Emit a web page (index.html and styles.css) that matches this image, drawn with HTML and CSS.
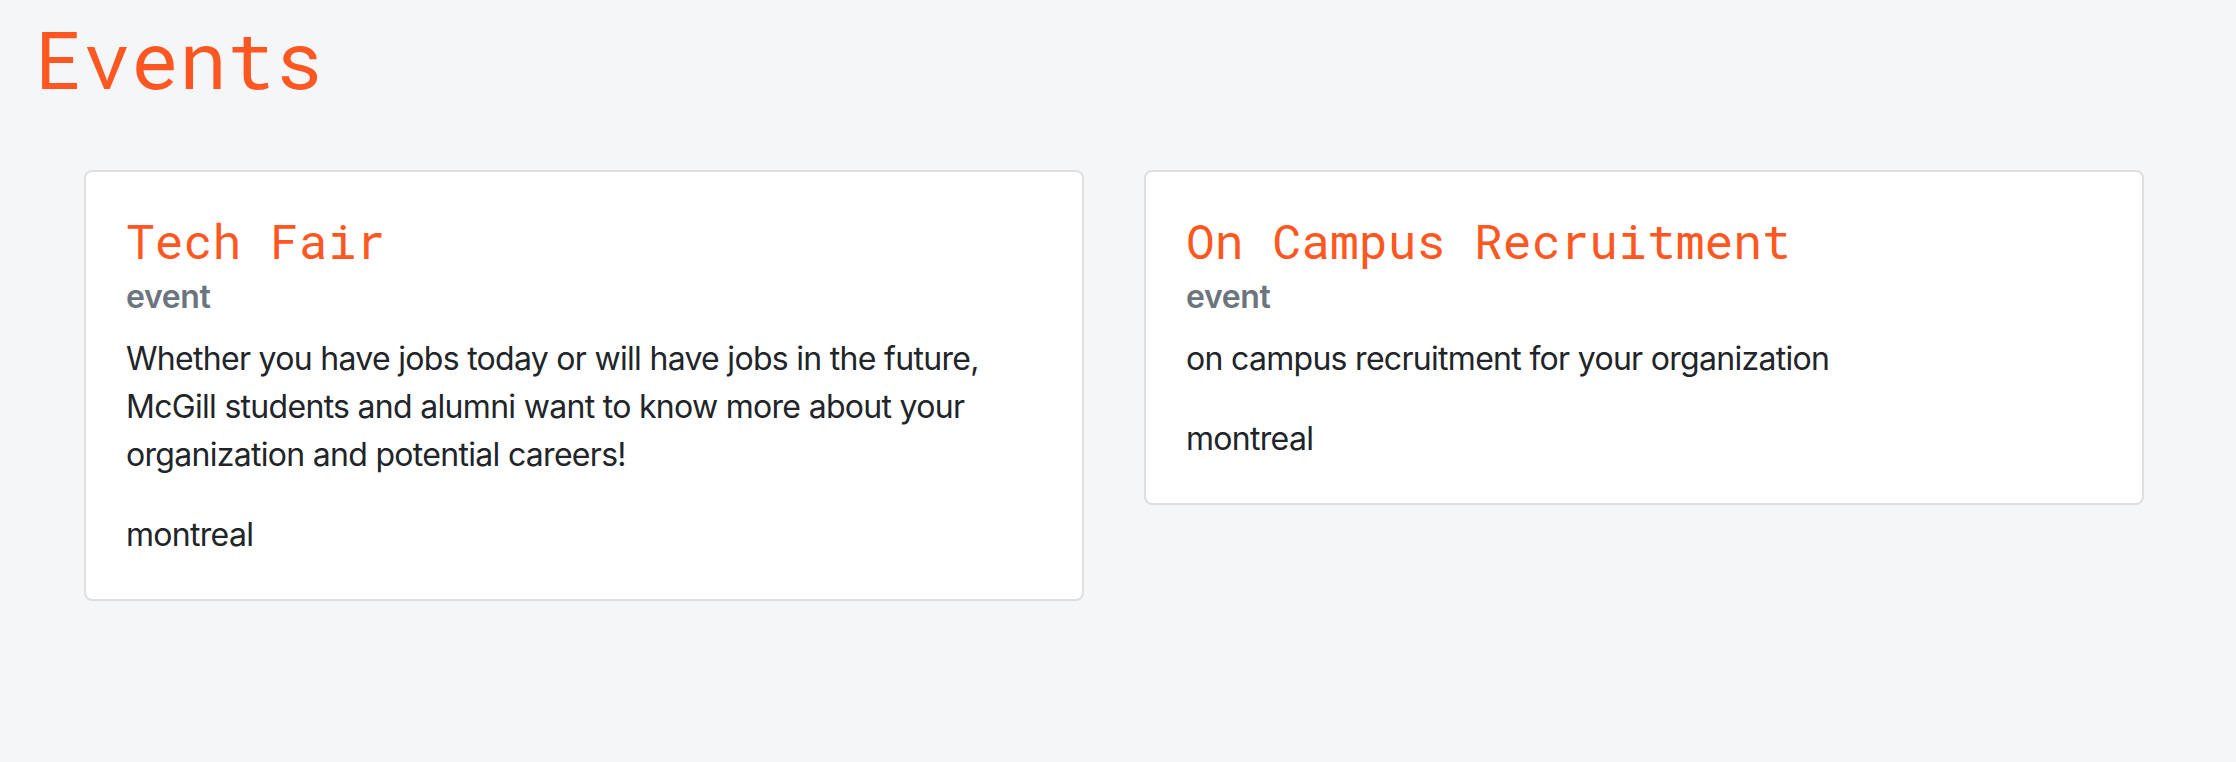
FILE: index.html
```html
<!DOCTYPE html>
<html lang="en">
<head>
<meta charset="utf-8">
<title>Events</title>
<link rel="stylesheet" href="styles.css">
</head>
<body>
<main class="page">
  <h1 class="page-title">Events</h1>
  <section class="cards">
    <article class="card">
      <h4 class="card-title">Tech Fair</h4>
      <h6 class="card-subtitle">event</h6>
      <p class="card-text">Whether you have jobs today or will have jobs in the future, McGill students and alumni want to know more about your organization and potential careers!</p>
      <p class="card-text">montreal</p>
    </article>
    <article class="card">
      <h4 class="card-title">On Campus Recruitment</h4>
      <h6 class="card-subtitle">event</h6>
      <p class="card-text">on campus recruitment for your organization</p>
      <p class="card-text">montreal</p>
    </article>
  </section>
</main>
</body>
</html>
```
FILE: styles.css
```css
html, body {
  margin: 0;
  padding: 0;
}
body {
  background: #f5f6f8;
  font-family: Inter, "Noto Sans", "Liberation Sans", sans-serif;
  color: #212529;
  width: 2236px;
  height: 762px;
  overflow: hidden;
}
.page {
  padding: 10px 92px 0 84px;
}
.page-title {
  margin: 0 0 64px -49px;
  font-family: "Roboto Mono", "DejaVu Sans Mono", monospace;
  font-weight: 400;
  font-size: 80px;
  line-height: 96px;
  color: #ff5722;
}
.cards {
  display: flex;
  align-items: flex-start;
  gap: 60px;
}
.card {
  box-sizing: border-box;
  width: 1000px;
  background: #fff;
  border: 2px solid #dfdfdf;
  border-radius: 8px;
  padding: 40px 40px;
}
.card-title {
  margin: 0 0 8.6px;
  font-family: "Roboto Mono", "DejaVu Sans Mono", monospace;
  font-weight: 400;
  font-size: 48px;
  line-height: 57.6px;
  color: #ff5722;
}
.card-subtitle {
  margin: 0 0 18px;
  font-size: 32px;
  line-height: 38.4px;
  font-weight: 600;
  letter-spacing: -0.4px;
  color: #6c757d;
}
.card-text {
  margin: 0 0 32px;
  font-size: 32px;
  line-height: 48px;
  letter-spacing: -0.7px;
}
.card-text:last-child {
  margin-bottom: 0;
}
```
